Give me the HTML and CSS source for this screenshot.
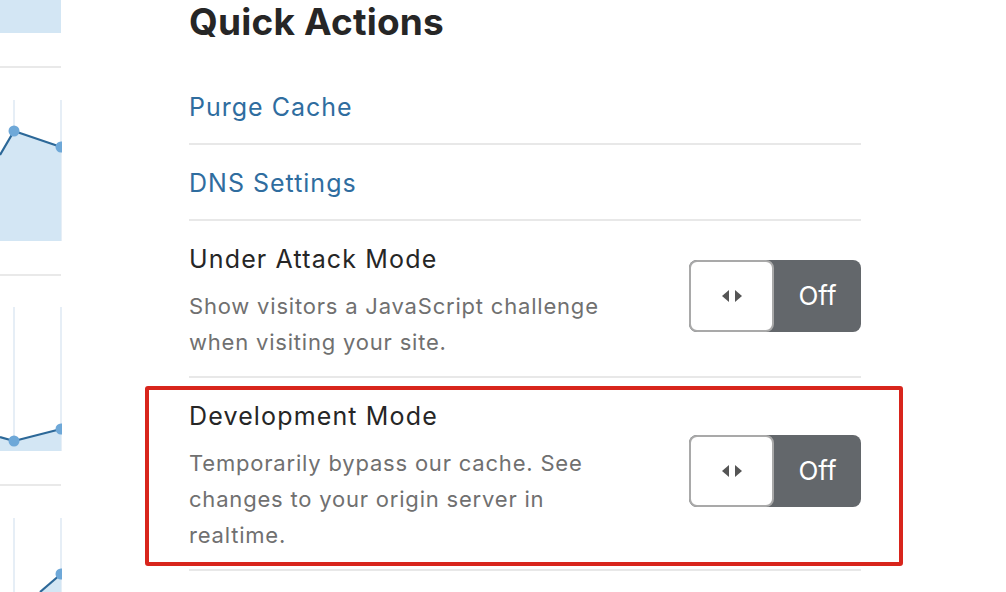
FILE: index.html
```html
<!DOCTYPE html>
<html lang="en">
<head>
<meta charset="utf-8">
<title>Quick Actions</title>
<link rel="stylesheet" href="styles.css">
</head>
<body>
<div class="page">
  <aside class="charts">
    <div class="chart chart-1">
      <svg width="62" height="66" viewBox="0 0 62 66"><rect x="0" y="0" width="61" height="33" fill="#d3e6f4"/></svg>
    </div>
    <div class="chart chart-2">
      <svg width="62" height="206" viewBox="0 0 62 206">
        <line x1="14" y1="32" x2="14" y2="173" class="grid"/>
        <line x1="61" y1="32" x2="61" y2="173" class="grid"/>
        <polygon points="0,87 14,63 61,79 61,173 0,173" fill="#d3e6f4"/>
        <polyline points="0,87 14,63 61,79" class="line"/>
        <circle cx="14" cy="63" r="5.5" class="dot"/>
        <circle cx="61" cy="79" r="5.5" class="dot"/>
      </svg>
    </div>
    <div class="chart chart-3">
      <svg width="62" height="208" viewBox="0 0 62 208">
        <line x1="14" y1="31" x2="14" y2="175" class="grid"/>
        <line x1="61" y1="31" x2="61" y2="175" class="grid"/>
        <polygon points="0,161 14,165 61,153 61,175 0,175" fill="#d3e6f4"/>
        <polyline points="0,161 14,165 61,153" class="line"/>
        <circle cx="14" cy="165" r="5.5" class="dot"/>
        <circle cx="61" cy="153" r="5.5" class="dot"/>
      </svg>
    </div>
    <div class="chart chart-4">
      <svg width="62" height="106" viewBox="0 0 62 106">
        <line x1="14" y1="32" x2="14" y2="106" class="grid"/>
        <line x1="61" y1="32" x2="61" y2="106" class="grid"/>
        <polygon points="40,106 61,88 61,106" fill="#d3e6f4"/>
        <polyline points="40,106 61,88" class="line"/>
        <circle cx="61" cy="88" r="5.5" class="dot"/>
      </svg>
    </div>
  </aside>

  <main class="actions">
    <h1 class="actions-title">Quick Actions</h1>
    <ul class="action-list">
      <li class="action-row"><a class="action-link" href="#">Purge Cache</a></li>
      <li class="action-row"><a class="action-link" href="#">DNS Settings</a></li>
      <li class="action-row setting">
        <div class="setting-text">
          <h2 class="setting-title">Under Attack Mode</h2>
          <p class="setting-desc">Show visitors a JavaScript challenge when visiting your site.</p>
        </div>
        <div class="toggle">
          <span class="toggle-knob">
            <svg width="22" height="14" viewBox="0 0 22 14"><polygon points="1,7 8,1 8,13" fill="#555"/><polygon points="21,7 14,1 14,13" fill="#555"/></svg>
          </span>
          <span class="toggle-label">Off</span>
        </div>
      </li>
      <li class="action-row setting highlighted">
        <div class="setting-text">
          <h2 class="setting-title">Development Mode</h2>
          <p class="setting-desc">Temporarily bypass our cache. See changes to your origin server in realtime.</p>
        </div>
        <div class="toggle">
          <span class="toggle-knob">
            <svg width="22" height="14" viewBox="0 0 22 14"><polygon points="1,7 8,1 8,13" fill="#555"/><polygon points="21,7 14,1 14,13" fill="#555"/></svg>
          </span>
          <span class="toggle-label">Off</span>
        </div>
        <span class="highlight-box"></span>
      </li>
    </ul>
  </main>
</div>
</body>
</html>
```

FILE: styles.css
```css
* { box-sizing: border-box; }

html, body {
  margin: 0;
  padding: 0;
  background: #ffffff;
}

body {
  font-family: "Inter", "Liberation Sans", sans-serif;
  color: #262626;
  width: 1006px;
  height: 592px;
  overflow: hidden;
}

.page {
  display: flex;
  align-items: flex-start;
}

/* Left chart column */
.charts {
  width: 62px;
  flex: none;
  display: flex;
  flex-direction: column;
}

.chart {
  border-bottom: 2px solid #e9e9e9;
  width: 61px;
}
.chart svg { display: block; }
.chart-4 { border-bottom: none; }

.chart .grid { stroke: #e6eef6; stroke-width: 2; }
.chart .line { stroke: #2c6898; stroke-width: 2.2; fill: none; stroke-linejoin: round; }
.chart .dot { fill: #6ea8d8; }

/* Main actions */
.actions {
  margin-left: 127px;
  width: 672px;
}

.actions-title {
  margin: 0;
  height: 69px;
  font-size: 37px;
  line-height: 44px;
  font-weight: 700;
  color: #262626;
  letter-spacing: 0.2px;
}

.action-list {
  list-style: none;
  margin: 0;
  padding: 0;
}

.action-row {
  position: relative;
  border-bottom: 2px solid #e8e8e8;
  padding: 20px 0 18px;
  display: flex;
  align-items: center;
  justify-content: space-between;
}
.action-row.setting { padding-bottom: 16px; }

.action-link {
  font-size: 25px;
  line-height: 36px;
  letter-spacing: 1px;
  color: #2f6d9f;
  text-decoration: none;
}

.setting-text {
  width: 440px;
}

.setting-title {
  margin: 0 0 11px;
  font-size: 25px;
  line-height: 36px;
  letter-spacing: 1.15px;
  font-weight: 400;
  color: #262626;
}

.setting-desc {
  margin: 0;
  font-size: 22px;
  line-height: 36px;
  letter-spacing: 0.8px;
  color: #707070;
}

.toggle {
  flex: none;
  width: 172px;
  height: 72px;
  margin-bottom: 10px;
  border-radius: 8px;
  background: #63676b;
  display: flex;
  align-items: stretch;
}

.toggle-knob {
  width: 85px;
  background: #ffffff;
  border: 2px solid #a9a9a9;
  border-radius: 8px;
  display: flex;
  align-items: center;
  justify-content: center;
}
.toggle-knob svg { display: block; }

.toggle-label {
  flex: 1;
  display: flex;
  align-items: center;
  justify-content: center;
  color: #ffffff;
  font-size: 26px;
}

.highlight-box {
  position: absolute;
  left: -44px;
  right: -42px;
  top: 8px;
  bottom: 3px;
  border: 4px solid #d8251c;
  border-radius: 3px;
  pointer-events: none;
}
```
